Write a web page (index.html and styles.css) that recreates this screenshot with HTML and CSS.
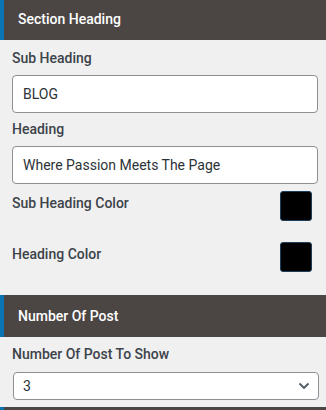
FILE: index.html
```html
<!DOCTYPE html>
<html lang="en">
<head>
  <meta charset="UTF-8" />
  <meta name="viewport" content="width=device-width, initial-scale=1.0" />
  <title>Blog Section Settings</title>
  <link rel="stylesheet" href="styles.css">
</head>
<body>
  <div class="settings">
    <div class="panel">
      <div class="panel-head">Section Heading</div>
      <div class="panel-body">
        <label class="field-label">Sub Heading</label>
        <input class="text-input" type="text" value="BLOG" />

        <label class="field-label">Heading</label>
        <input class="text-input" type="text" value="Where Passion Meets The Page" />

        <div class="color-row">
          <span class="field-label">Sub Heading Color</span>
          <span class="swatch"></span>
        </div>
        <div class="color-row">
          <span class="field-label">Heading Color</span>
          <span class="swatch"></span>
        </div>
      </div>
    </div>

    <div class="panel">
      <div class="panel-head">Number Of Post</div>
      <div class="panel-body post-body">
        <label class="field-label">Number Of Post To Show</label>
        <div class="select-box">
          <span>3</span>
          <svg width="12" height="8" viewBox="0 0 12 8"><path d="M1.5 1.5 L6 6 L10.5 1.5" fill="none" stroke="#50575e" stroke-width="1.8"/></svg>
        </div>
      </div>
    </div>

    <div class="panel">
      <div class="panel-head"></div>
    </div>
  </div>
</body>
</html>
```

FILE: styles.css
```css
body {
  margin: 0;
  font-family: Roboto, "Liberation Sans", sans-serif;
  background-color: #f0f0f0;
  color: #3c434a;
}
.settings {
  margin-top: -2px;
}
.panel-head {
  height: 42px;
  line-height: 42px;
  background-color: #4b4644;
  border-left: 4px solid #0b74b5;
  padding-left: 14px;
  color: #fff;
  font-size: 14px;
  font-weight: 500;
}
.panel-body {
  padding: 8px 8px 23px 12px;
  display: flex;
  flex-direction: column;
}
.field-label {
  display: block;
  font-size: 14px;
  font-weight: 500;
  line-height: 20px;
  color: #3c434a;
}
.text-input {
  box-sizing: border-box;
  height: 38px;
  margin: 7px 0 6px;
  padding: 0 10px;
  font-family: inherit;
  font-size: 14px;
  color: #2c3338;
  background: #fff;
  border: 1px solid #8c8f94;
  border-radius: 4px;
}
.color-row {
  display: flex;
  justify-content: space-between;
  align-items: flex-start;
  height: 30px;
  margin-top: 1px;
  padding-right: 6px;
}
.color-row .field-label {
  margin-top: 2px;
}
.color-row + .color-row {
  margin-top: 21px;
}
.swatch {
  width: 30px;
  height: 28px;
  background: #000;
  border: 1px solid #1d3d5c;
  border-radius: 3px;
}
.post-body {
  padding-top: 7px;
  padding-bottom: 7px;
}
.select-box {
  box-sizing: border-box;
  height: 28px;
  margin: 8px -1px 0 1px;
  padding: 0 8px 0 9px;
  display: flex;
  justify-content: space-between;
  align-items: center;
  font-size: 14px;
  color: #2c3338;
  background: #fff;
  border: 1px solid #8c8f94;
  border-radius: 4px;
}
```
